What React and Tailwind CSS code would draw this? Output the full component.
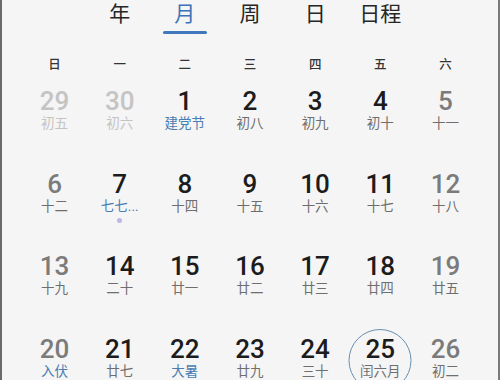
const weekdays = ["日", "一", "二", "三", "四", "五", "六"];

// tone: out = other month, wk = weekend, nm = normal
const weeks = [
  [
    ["29", "初五", "out"],
    ["30", "初六", "out"],
    ["1", "建党节", "nm", true],
    ["2", "初八", "nm"],
    ["3", "初九", "nm"],
    ["4", "初十", "nm"],
    ["5", "十一", "wk"],
  ],
  [
    ["6", "十二", "wk"],
    ["7", "七七...", "nm", true, "dot"],
    ["8", "十四", "nm"],
    ["9", "十五", "nm"],
    ["10", "十六", "nm"],
    ["11", "十七", "nm"],
    ["12", "十八", "wk"],
  ],
  [
    ["13", "十九", "wk"],
    ["14", "二十", "nm"],
    ["15", "廿一", "nm"],
    ["16", "廿二", "nm"],
    ["17", "廿三", "nm"],
    ["18", "廿四", "nm"],
    ["19", "廿五", "wk"],
  ],
  [
    ["20", "入伏", "wk", true],
    ["21", "廿七", "nm"],
    ["22", "大暑", "nm", true],
    ["23", "廿九", "nm"],
    ["24", "三十", "nm"],
    ["25", "闰六月", "nm", false, "today"],
    ["26", "初二", "wk"],
  ],
];

function DayCell({ day }) {
  const [num, lunar, tone, festival, mark] = day;
  const numColor =
    tone === "out" ? "text-[#c4c4c4]" : tone === "wk" ? "text-[#7b7b7b]" : "text-[#1c1c1c]";
  const lunarColor = festival
    ? "text-[#4a7db3]"
    : tone === "out"
    ? "text-[#c4c4c4]"
    : "text-[#6e6e6e]";
  return (
    <div className="relative h-[82.5px] flex flex-col items-center">
      {mark === "today" && (
        <div className="absolute left-1/2 top-[-8px] -translate-x-1/2 w-[63px] h-[63px] rounded-full border-[1.5px] border-[#6590b2]" />
      )}
      <div className={`relative text-[26px] leading-[25px] font-medium ${numColor}`}>{num}</div>
      <div className={`relative text-[13.5px] leading-[14px] mt-[2px] ${lunarColor}`}>{lunar}</div>
      {mark === "dot" && <div className="mt-[5px] w-[5px] h-[5px] rounded-full bg-[#b9b8e6]" />}
    </div>
  );
}

export default function App() {
  return (
    <div
      className="w-[500px] h-[380px] overflow-hidden bg-[#f5f5f5] border-l-2 border-r-2 border-l-[#6a6a6a] border-r-[#7a7a7a] px-[20px]"
      style={{ fontFamily: "Roboto, 'Noto Sans CJK SC', sans-serif" }}
    >
      <div className="grid grid-cols-7 h-[55px]">
        <div />
        {["年", "月", "周", "日", "日程"].map((t, i) => (
          <div key={t} className="flex flex-col items-center">
            <div className={`text-[21px] leading-[28px] ${i === 1 ? "text-[#3a74b8]" : "text-[#262626]"}`}>{t}</div>
            {i === 1 && <div className="mt-[3px] w-[44px] h-[3px] rounded-full bg-[#3f78bd]" />}
          </div>
        ))}
        <div />
      </div>
      <div className="grid grid-cols-7 h-[34px]">
        {weekdays.map((w) => (
          <div key={w} className="text-center text-[12.5px] leading-[20px] font-medium text-[#333]">
            {w}
          </div>
        ))}
      </div>
      {weeks.map((row, r) => (
        <div key={r} className="grid grid-cols-7">
          {row.map((d) => (
            <DayCell key={d[0]} day={d} />
          ))}
        </div>
      ))}
    </div>
  );
}
